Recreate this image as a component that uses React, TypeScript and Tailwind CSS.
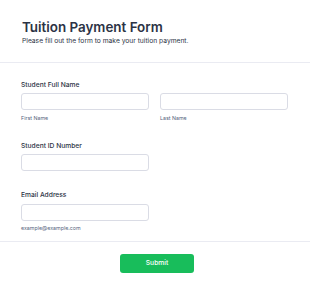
import React from 'react';

const Label: React.FC<{ children: React.ReactNode }> = ({ children }) => (
    <label className="block text-[6.7px] leading-[9px] font-medium text-[#2c3345]">{children}</label>
);

const Sub: React.FC<{ children: React.ReactNode }> = ({ children }) => (
    <div className="mt-[4.5px] text-[5.3px] leading-[7px] text-[#57647e]">{children}</div>
);

const Input: React.FC = () => (
    <input className="block w-[128px] h-[17px] mt-[3.5px] rounded-[3px] border border-[#dadce5] bg-white" />
);

export default function App() {
    return (
        <div className="w-[310px] h-[291px] bg-white overflow-hidden" style={{ fontFamily: 'Inter, "Liberation Sans", sans-serif' }}>
            <header className="px-[22px] pt-[19px] pb-[16.5px] border-b border-[#eaebf2]">
                <h1 className="text-[13.4px] leading-[17px] font-semibold text-[#2c3345]">Tuition Payment Form</h1>
                <p className="mt-[0.5px] text-[6.7px] leading-[9px] text-[#2c3345]">Please fill out the form to make your tuition payment.</p>
            </header>

            <main className="pl-[21px] pt-[17.5px] flex flex-col gap-[20px]">
                <div>
                    <Label>Student Full Name</Label>
                    <div className="flex gap-[11px]">
                        <div>
                            <Input />
                            <Sub>First Name</Sub>
                        </div>
                        <div>
                            <Input />
                            <Sub>Last Name</Sub>
                        </div>
                    </div>
                </div>

                <div>
                    <Label>Student ID Number</Label>
                    <Input />
                </div>

                <div>
                    <Label>Email Address</Label>
                    <Input />
                    <Sub>example@example.com</Sub>
                </div>
            </main>

            <div className="mt-[9px] border-t border-[#eaebf2] flex justify-center pl-[4px] pt-[12px]">
                <button className="w-[74px] h-[19px] rounded-[3px] bg-[#18bd5b] text-white text-[6.7px] font-medium">Submit</button>
            </div>
        </div>
    );
}
